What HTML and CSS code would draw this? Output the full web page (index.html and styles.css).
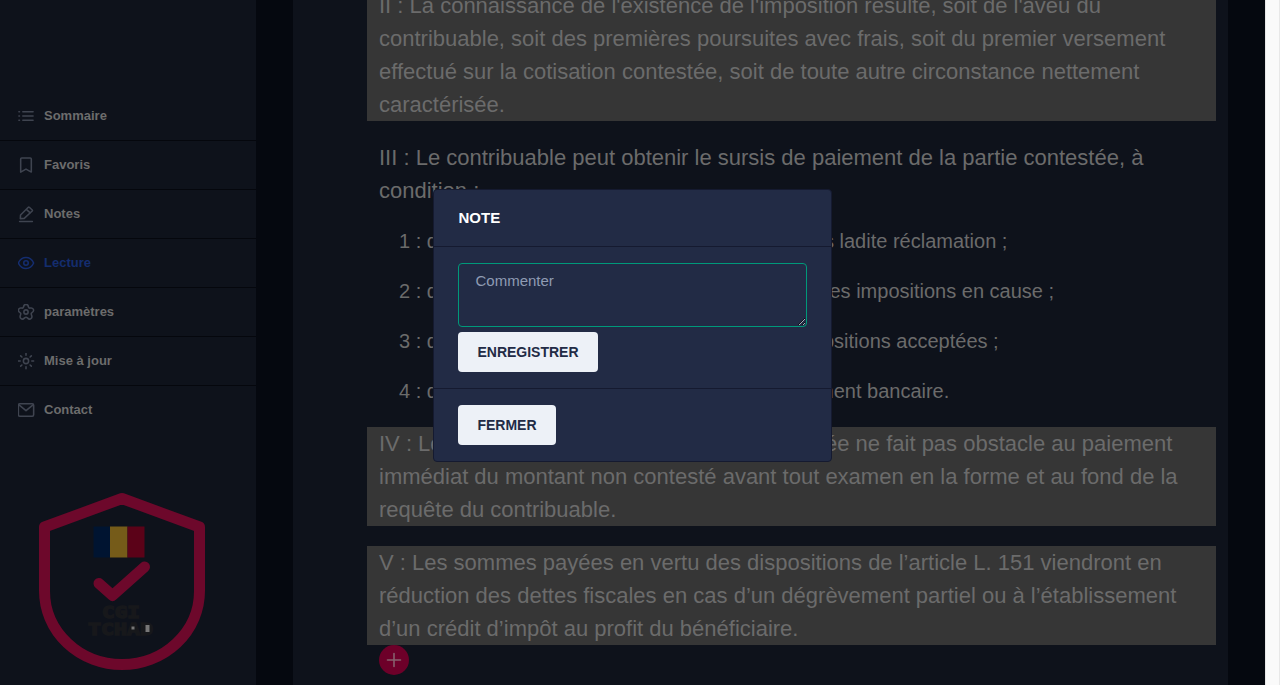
FILE: index.html
```html
<!DOCTYPE html>
<html lang="fr">
<head>
<meta charset="utf-8">
<title>CGI Tchad</title>
<link rel="stylesheet" href="styles.css">
</head>
<body>
<div class="app">
  <aside class="sidebar">
    <nav class="menu">
      <a class="item"><svg class="icon" viewBox="0 0 24 24"><path d="M7.500 6H22M7.500 12H22M7.500 18H22M2 6h.8M2 12h.8M2 18h.8"/></svg>Sommaire</a>
      <a class="item"><svg class="icon" viewBox="0 0 24 24"><path d="M4.500 3.500Q4.500 2 6 2H18Q19.500 2 19.500 3.500V22L12 17.800L4.500 22Z"/></svg>Favoris</a>
      <a class="item"><svg class="icon" viewBox="0 0 24 24"><path d="M3 22.500H21M4 18.500L4.300 13.500L15.300 2.500Q16 1.800 16.700 2.500L20.800 6.300Q21.500 7 20.800 7.700L9.500 18.200ZM12.500 5.500L18 10.500"/></svg>Notes</a>
      <a class="item active"><svg class="icon" viewBox="0 0 24 24"><path d="M1.200 12C3.500 7 7.500 4.200 12 4.200S20.500 7 22.800 12C20.500 17 16.500 19.800 12 19.800S3.500 17 1.200 12Z"/><circle cx="12" cy="12" r="3.200"/></svg>Lecture</a>
      <a class="item"><svg class="icon" viewBox="0 0 24 24"><path d="M8.500 5C8.800 2.500 10 1.200 12 1.200S15.200 2.500 15.500 5Q16 6.900 18 6.500C20.500 6 22.300 7.200 22.700 9S22.200 11.800 20.400 13Q18.800 14 19.700 16C20.700 18.200 20.500 20.300 18.900 21.500S15.500 21.900 14 20.300Q12 18.700 10 20.300C8.500 21.900 6.700 22.700 5.100 21.500S3.300 18.200 4.300 16Q5.200 14 3.600 13C1.800 11.800.9 10.800 1.300 9S3.500 6 6 6.500Q8 6.900 8.500 5Z"/><circle cx="12" cy="12" r="3"/></svg>paramètres</a>
      <a class="item"><svg class="icon" viewBox="0 0 24 24"><circle cx="12" cy="12" r="3.700"/><path d="M12 1.200V3.800M12 20.200V22.800M1.200 12H3.800M20.200 12H22.800M4.500 4.800L6.200 6.400M17.800 17.600L19.500 19.200M4.500 19.200L6.200 17.600M17.800 6.400L19.500 4.800"/></svg>Mise à jour</a>
      <a class="item"><svg class="icon" viewBox="0 0 24 24"><rect x="1.200" y="3.200" width="21.600" height="17.600" rx="2"/><path d="M2.500 5L12 13L21.500 5"/></svg>Contact</a>
    </nav>
    <svg class="logo" viewBox="0 0 168 180">
      <path class="shield" d="M84 6.500L161.500 35V99A77.500 73.500 0 0 1 6.500 99V35Z"/>
      <path class="blue" d="M55.500 34.500h17v31h-17z"/><path class="yellow" d="M72 34.500h17.500v31H72z"/><path class="red" d="M89.500 34.500h17v31h-17z"/>
      <path class="check" d="M61 91.500L74.500 103.500L106.500 75"/>
      <text x="64" y="125.500" textLength="38" lengthAdjust="spacingAndGlyphs">CGI</text>
      <text x="50" y="142.500" textLength="65" lengthAdjust="spacingAndGlyphs">TCHAD</text>
      <path class="glint" d="M93.500 134.500h3v3h-3zM107.500 133h4v7h-4z"/>
    </svg>
  </aside>
  <main class="main">
    <article class="page">
      <p class="marked first">II : La connaissance de l'existence de l'imposition résulte, soit de l'aveu du<br>contribuable, soit des premières poursuites avec frais, soit du premier versement<br>effectué sur la cotisation contestée, soit de toute autre circonstance nettement<br>caractérisée.</p>
      <p class="plain">III : Le contribuable peut obtenir le sursis de paiement de la partie contestée, à<br>condition :</p>
      <ol class="terms">
        <li><span class="start s1">1 : d</span><span>s ladite réclamation ;</span></li>
        <li><span class="start">2 : d</span><span>es impositions en cause ;</span></li>
        <li><span class="start s3">3 : d</span><span>ositions acceptées ;</span></li>
        <li><span class="start s4">4 : d</span><span>ment bancaire.</span></li>
      </ol>
      <p class="marked"><span class="row"><span>IV : Le</span><span>ée ne fait pas obstacle au paiement</span></span>immédiat du montant non contesté avant tout examen en la forme et au fond de la<br>requête du contribuable.</p>
      <p class="marked">V : Les sommes payées en vertu des dispositions de l’article L. 151 viendront en<br>réduction des dettes fiscales en cas d’un dégrèvement partiel ou à l’établissement<br>d’un crédit d’impôt au profit du bénéficiaire.</p>
      <div class="add"><svg viewBox="0 0 30 30"><path d="M8.500 15H21.500M15 8.500V21.500"/></svg></div>
    </article>
  </main>
  <div class="scroll"></div>
</div>
<section class="dialog">
  <header class="head">NOTE</header>
  <div class="body"><textarea class="comment" placeholder="Commenter"></textarea><button class="btn save">ENREGISTRER</button></div>
  <footer class="foot"><button class="btn close">FERMER</button></footer>
</section>
</body>
</html>
```
FILE: styles.css
```css
* { box-sizing: border-box; }
body { margin: 0; width: 1280px; height: 685px; overflow: hidden; position: relative; background: #05080f; font-family: "Liberation Sans", Arial, sans-serif; }
.app { display: flex; height: 685px; }
.sidebar { width: 256px; flex: none; background: #0e121b; padding-top: 92px; }
.menu { display: flex; flex-direction: column; }
.item { height: 49px; padding: 0 16px; display: flex; align-items: center; gap: 8px; border-bottom: 1px solid #05070d; color: #6c6c6c; font-size: 13px; font-weight: 700; line-height: 24px; }
.item:last-child { border-bottom-color: transparent; }
.active { color: #142d6f; }
.icon { width: 20px; height: 20px; padding: 1.500px; flex: none; fill: none; stroke: #3f4450; stroke-width: 2.200; stroke-linecap: round; stroke-linejoin: round; }
.active .icon { stroke: #142d6f; }
.logo { display: block; width: 168px; height: 180px; margin: 57px 0 0 38px; }
.shield, .check { fill: none; stroke: #6d082b; stroke-width: 11; stroke-linejoin: round; stroke-linecap: round; }
.blue { fill: #001431; }
.yellow { fill: #755b19; }
.red { fill: #5b0218; }
.glint { fill: #777; }
.logo text { font: 700 16px "DejaVu Sans Mono", monospace; fill: #17181b; stroke: #17181b; stroke-width: 1.400px; }
.main { flex: 1; display: flex; padding: 0 37px; }
.page { flex: 1; height: 685px; overflow: hidden; background: #0e121b; padding: 0 12px 0 74px; font-size: 22px; line-height: 33px; color: #6b6b6b; white-space: nowrap; }
.page p { margin: 0 0 20px; padding: 0 12px; }
.page .marked { background: #363636; }
.page .first { margin-top: -11px; }
.page .plain { margin-bottom: 18px; }
.terms { list-style: none; margin: 0; padding: 0 0 2px 32px; font-size: 20px; }
.terms li { display: flex; height: 33px; margin-bottom: 17px; }
.start { width: 430.500px; }
.s1 { width: 425px; }
.s3 { width: 424px; }
.s4 { width: 418px; }
.row { display: flex; }
.row > span:first-child { width: 446px; }
.page .marked:last-of-type { margin-bottom: 0; }
.add { width: 30px; height: 30px; margin-left: 12px; border-radius: 50%; background: #6d0029; }
.add svg { display: block; width: 30px; height: 30px; stroke: #86606c; stroke-width: 1.600; stroke-linecap: round; }
.scroll { width: 15px; background: #fafafa; border-left: 1px solid #e8e8e8; border-right: 1px solid #e8e8e8; }
.dialog { position: absolute; left: 433px; top: 189px; width: 399px; height: 273px; border: 1px solid #151a30; border-radius: 4px; background: #222b45; overflow: hidden; }
.head { height: 57px; padding: 16px 24px 16px 24.500px; border-bottom: 1px solid #151a30; color: #fff; font-size: 15px; line-height: 24px; font-weight: 700; }
.body { height: 142px; padding: 16px 24px; border-bottom: 1px solid #151a30; }
.comment { display: block; width: 349px; height: 64px; margin-bottom: 5px; padding: 7px 16.500px; border: 1px solid #00997a; border-radius: 4px; outline: 0; background: #222b45; color: #fff; font: 15px/20px "Liberation Sans", Arial, sans-serif; }
.comment::placeholder { color: #8f9bb3; }
.foot { padding: 16px 24px; }
.btn { display: block; height: 40px; padding: 0; border: 0; border-radius: 4px; background: #edf1f7; color: #222b45; font: 700 14px/16px "Liberation Sans", Arial, sans-serif; }
.save { width: 140px; }
.close { width: 98px; }
```
